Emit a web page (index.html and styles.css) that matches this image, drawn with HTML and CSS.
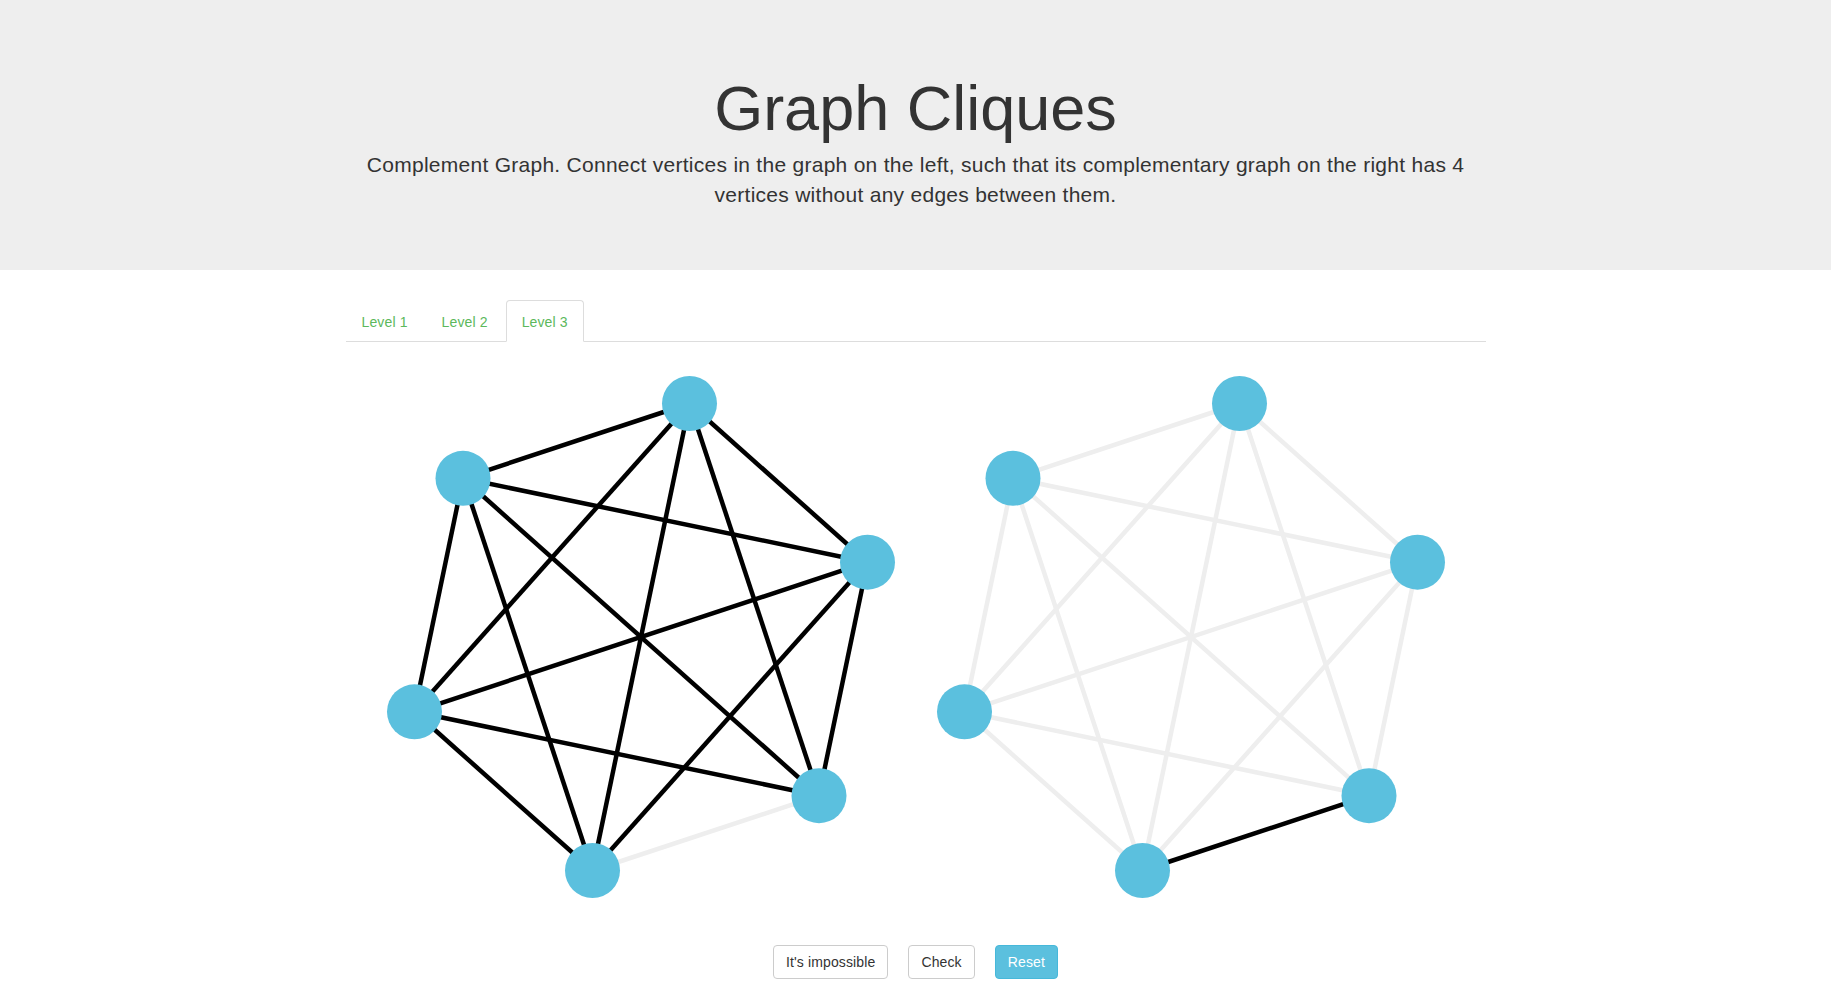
FILE: index.html
```html
<!DOCTYPE html>
<html lang="en">
<head>
<meta charset="utf-8">
<title>Graph Cliques</title>
<link rel="stylesheet" href="styles.css">
</head>
<body>
<header class="jumbotron">
  <div class="container">
    <h1 class="title">Graph Cliques</h1>
    <p class="lead">Complement Graph. Connect vertices in the graph on the left, such that its complementary graph on the right has 4 vertices without any edges between them.</p>
  </div>
</header>
<main class="container">
  <ul class="nav-tabs">
    <li><a href="#">Level 1</a></li>
    <li><a href="#">Level 2</a></li>
    <li class="active"><a href="#">Level 3</a></li>
  </ul>
  <div class="graphs">
    <svg class="graph" width="550" height="550" viewBox="0 0 550 550">
      <g class="edges-off">
        <line x1="453.0" y1="433.7" x2="226.5" y2="508.5"/>
      </g>
      <g class="edges-on">
        <line x1="323.5" y1="41.5" x2="501.5" y2="200.2"/>
        <line x1="323.5" y1="41.5" x2="453.0" y2="433.7"/>
        <line x1="323.5" y1="41.5" x2="226.5" y2="508.5"/>
        <line x1="323.5" y1="41.5" x2="48.5" y2="349.8"/>
        <line x1="323.5" y1="41.5" x2="97.0" y2="116.3"/>
        <line x1="501.5" y1="200.2" x2="453.0" y2="433.7"/>
        <line x1="501.5" y1="200.2" x2="226.5" y2="508.5"/>
        <line x1="501.5" y1="200.2" x2="48.5" y2="349.8"/>
        <line x1="501.5" y1="200.2" x2="97.0" y2="116.3"/>
        <line x1="453.0" y1="433.7" x2="48.5" y2="349.8"/>
        <line x1="453.0" y1="433.7" x2="97.0" y2="116.3"/>
        <line x1="226.5" y1="508.5" x2="48.5" y2="349.8"/>
        <line x1="226.5" y1="508.5" x2="97.0" y2="116.3"/>
        <line x1="48.5" y1="349.8" x2="97.0" y2="116.3"/>
      </g>
      <g class="nodes">
        <circle cx="323.5" cy="41.5" r="27.5"/>
        <circle cx="501.5" cy="200.2" r="27.5"/>
        <circle cx="453.0" cy="433.7" r="27.5"/>
        <circle cx="226.5" cy="508.5" r="27.5"/>
        <circle cx="48.5" cy="349.8" r="27.5"/>
        <circle cx="97.0" cy="116.3" r="27.5"/>
      </g>
    </svg>
    <svg class="graph" width="550" height="550" viewBox="0 0 550 550">
      <g class="edges-off">
        <line x1="323.5" y1="41.5" x2="501.5" y2="200.2"/>
        <line x1="323.5" y1="41.5" x2="453.0" y2="433.7"/>
        <line x1="323.5" y1="41.5" x2="226.5" y2="508.5"/>
        <line x1="323.5" y1="41.5" x2="48.5" y2="349.8"/>
        <line x1="323.5" y1="41.5" x2="97.0" y2="116.3"/>
        <line x1="501.5" y1="200.2" x2="453.0" y2="433.7"/>
        <line x1="501.5" y1="200.2" x2="226.5" y2="508.5"/>
        <line x1="501.5" y1="200.2" x2="48.5" y2="349.8"/>
        <line x1="501.5" y1="200.2" x2="97.0" y2="116.3"/>
        <line x1="453.0" y1="433.7" x2="48.5" y2="349.8"/>
        <line x1="453.0" y1="433.7" x2="97.0" y2="116.3"/>
        <line x1="226.5" y1="508.5" x2="48.5" y2="349.8"/>
        <line x1="226.5" y1="508.5" x2="97.0" y2="116.3"/>
        <line x1="48.5" y1="349.8" x2="97.0" y2="116.3"/>
      </g>
      <g class="edges-on">
        <line x1="453.0" y1="433.7" x2="226.5" y2="508.5"/>
      </g>
      <g class="nodes">
        <circle cx="323.5" cy="41.5" r="27.5"/>
        <circle cx="501.5" cy="200.2" r="27.5"/>
        <circle cx="453.0" cy="433.7" r="27.5"/>
        <circle cx="226.5" cy="508.5" r="27.5"/>
        <circle cx="48.5" cy="349.8" r="27.5"/>
        <circle cx="97.0" cy="116.3" r="27.5"/>
      </g>
    </svg>
  </div>
  <div class="actions">
    <button class="btn" type="button">It's impossible</button>
    <button class="btn" type="button">Check</button>
    <button class="btn btn-info" type="button">Reset</button>
  </div>
</main>
</body>
</html>
```
FILE: styles.css
```css
* {
  box-sizing: border-box;
}

html, body {
  margin: 0;
  padding: 0;
}

body {
  font-family: "Liberation Sans", Arial, sans-serif;
  font-size: 14px;
  line-height: 20px;
  letter-spacing: 0.13px;
  color: #333;
  background: #fff;
}

.container {
  width: 1140px;
  margin: 0 auto;
}

.jumbotron {
  background: #eee;
  padding: 74px 0 60px;
  margin-bottom: 30px;
  text-align: center;
}

.title {
  margin: 0 0 7px;
  font-size: 63px;
  line-height: 69.3px;
  font-weight: 400;
  letter-spacing: 0;
  color: #333;
}

.lead {
  margin: 0;
  font-size: 21px;
  line-height: 30px;
  font-weight: 400;
  letter-spacing: 0.27px;
  color: #333;
}

.nav-tabs {
  display: flex;
  list-style: none;
  margin: 0;
  padding: 0;
  border-bottom: 1px solid #ddd;
}

.nav-tabs li {
  margin-bottom: -1px;
}

.nav-tabs a {
  display: block;
  padding: 11px 15px 9px;
  margin-right: 2px;
  line-height: 20px;
  border: 1px solid transparent;
  border-radius: 4px 4px 0 0;
  color: #5cb85c;
  text-decoration: none;
}

.nav-tabs .active a {
  background: #fff;
  border-color: #ddd #ddd transparent;
}

.graphs {
  display: flex;
  justify-content: center;
  margin-top: 20px;
}

.graph {
  display: block;
  flex: 0 0 550px;
}

.edges-on line {
  stroke: #000;
  stroke-width: 4.5;
}

.edges-off line {
  stroke: #eee;
  stroke-width: 4.5;
}

.nodes circle {
  fill: #5bc0de;
}

.actions {
  display: flex;
  justify-content: center;
  gap: 20px;
  margin-top: 33px;
}

.btn {
  font-family: "Liberation Sans", Arial, sans-serif;
  font-size: 14px;
  line-height: 20px;
  letter-spacing: 0.13px;
  padding: 6px 12px;
  color: #333;
  background: #fff;
  border: 1px solid #ccc;
  border-radius: 4px;
  cursor: pointer;
}

.btn-info {
  color: #fff;
  background: #5bc0de;
  border-color: #46b8da;
}
```
